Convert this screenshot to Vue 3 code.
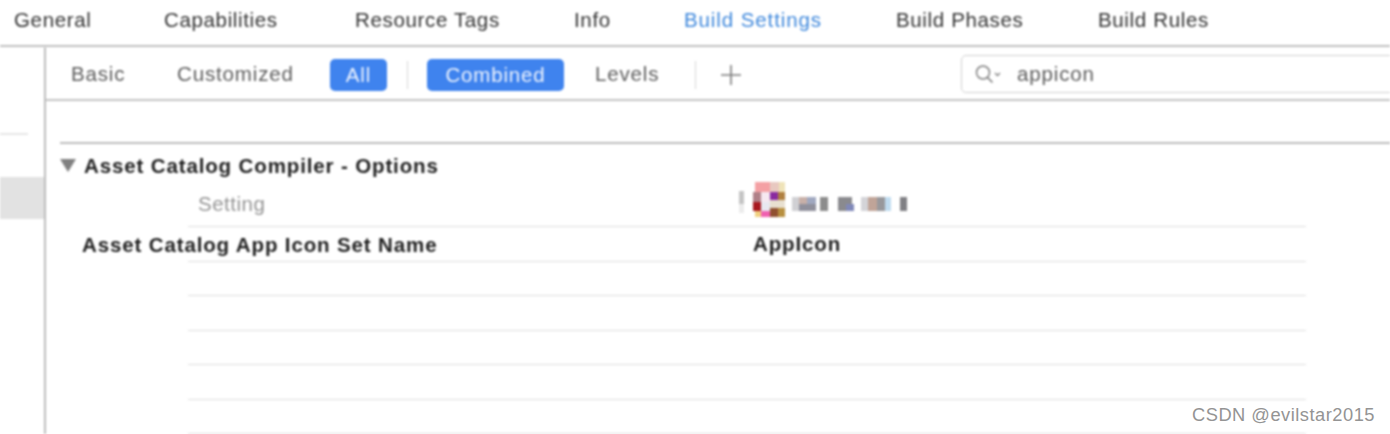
<script setup>
const tabs = ['General', 'Capabilities', 'Resource Tags', 'Info', 'Build Settings', 'Build Phases', 'Build Rules']
const emptyRows = [1, 2, 3, 4, 5]
const mosaic = [
  [2, 0, 15, 10, '#f4a0a4'], [17, 0, 9, 10, '#e8c8c0'], [26, 0, 6, 10, '#efe3b8'],
  [0, 10, 8, 10, '#b08088'], [8, 10, 9, 10, '#f6e8f0'], [17, 10, 8, 8, '#8a2aa0'], [25, 10, 7, 8, '#b08040'],
  [0, 20, 8, 9, '#a81820'], [8, 20, 9, 9, '#e8e8f0'], [17, 18, 15, 8, '#e8e0d0'],
  [2, 29, 8, 6, '#f0d080'], [8, 29, 9, 6, '#f060b0'], [17, 26, 8, 9, '#905030'], [25, 26, 7, 9, '#b89040']
]
const smear = [
  [0, 0, 7, 14, '#d0d0d4'], [7, 0, 8, 7, '#c8b0a8'], [15, 0, 9, 7, '#a0a8c0'], [7, 7, 17, 7, '#90909c'],
  [28, 0, 8, 14, '#8c8c8c'], [46, 0, 14, 14, '#8a8a8e'], [54, 7, 8, 7, '#8088b8'],
  [69, 0, 7, 14, '#d4d4d8'], [76, 0, 9, 14, '#c0a498'], [85, 0, 8, 14, '#98989c'], [93, 0, 6, 14, '#c0dcf0'],
  [108, 0, 7, 14, '#808084']
]
</script>

<template>
  <div class="page">
    <nav class="tabs">
      <span v-for="t in tabs" :key="t" class="tab" :class="{ active: t === 'Build Settings' }">{{ t }}</span>
    </nav>
    <div class="body">
      <aside class="side">
        <div class="side-line"></div>
        <div class="side-sel"></div>
      </aside>
      <main class="main">
        <div class="toolbar">
          <span class="tool basic">Basic</span>
          <span class="tool custom">Customized</span>
          <span class="pill all">All</span>
          <i class="sep first"></i>
          <span class="pill combined">Combined</span>
          <span class="tool levels">Levels</span>
          <i class="sep second"></i>
          <svg class="plus" width="22" height="22" viewBox="0 0 22 22">
            <path d="M11 1v20M1 11h20" stroke="#7c7c7c" stroke-width="1.6" fill="none" />
          </svg>
          <div class="search">
            <svg class="search-icon" width="30" height="22" viewBox="0 0 30 22">
              <circle cx="9" cy="9.500" r="6.500" stroke="#808080" stroke-width="1.500" fill="none" />
              <path d="M13.500 14.500l5 5" stroke="#808080" stroke-width="1.700" fill="none" />
              <path d="M21 10l2.500 2.500L26 10" stroke="#808080" stroke-width="1.300" fill="none" />
            </svg>
            <span class="search-text">appicon</span>
          </div>
        </div>
        <div class="content">
          <div class="section-head">
            <svg width="16" height="13" viewBox="0 0 16 13"><path d="M0 0h16L8 13z" fill="#808080" /></svg>
            <span>Asset Catalog Compiler - Options</span>
          </div>
          <div class="row header-row">
            <span class="setting">Setting</span>
            <div class="target">
              <svg width="176" height="38" viewBox="0 0 176 38">
                <rect x="0" y="9" width="5" height="13" fill="#c4c4c4" />
                <rect x="0" y="22" width="5" height="9" fill="#ececec" />
                <g transform="translate(14 0)">
                  <rect v-for="(m, i) in mosaic" :key="i" :x="m[0]" :y="m[1]" :width="m[2]" :height="m[3]" :fill="m[4]" />
                </g>
                <g transform="translate(53 15)">
                  <rect v-for="(m, i) in smear" :key="i" :x="m[0]" :y="m[1]" :width="m[2]" :height="m[3]" :fill="m[4]" />
                </g>
              </svg>
            </div>
          </div>
          <div class="row value-row">
            <span class="name">Asset Catalog App Icon Set Name</span>
            <span class="value">AppIcon</span>
          </div>
          <div v-for="r in emptyRows" :key="r" class="row empty"></div>
        </div>
      </main>
    </div>
    <div class="mark">CSDN @evilstar2015</div>
  </div>
</template>

<style scoped>
.page {
  position: relative;
  width: 1390px;
  height: 434px;
  overflow: hidden;
  background: #fff;
  font-family: "Liberation Sans", Arial, sans-serif;
  color: #555;
}
.tabs {
  display: grid;
  grid-template-columns: 150px 191px 219px 110px 212px 202px 1fr;
  padding-left: 14px;
  padding-bottom: 6px;
  height: 39px;
  align-items: center;
  border-bottom: 2px solid #c0c0c0;
  font-size: 20.500px;
  letter-spacing: 0.650px;
  filter: blur(0.8px);
}
.tab { color: #333; white-space: nowrap; }
.tab.active { color: #3f88dc; letter-spacing: 0.900px; }
.body { display: flex; height: 387px; filter: blur(0.8px); }
.side {
  width: 44px;
  flex: none;
  border-right: 2px solid #bcbcbc;
  padding-top: 86px;
}
.side-line { width: 28px; height: 2px; background: #e6e6e6; }
.side-sel { height: 42px; margin-top: 42px; background: #e2e2e2; }
.main { flex: 1; min-width: 0; overflow: hidden; }
.toolbar {
  display: flex;
  align-items: center;
  height: 52px;
  border-bottom: 2px solid #c4c4c4;
  font-size: 20.500px;
  letter-spacing: 0.850px;
}
.toolbar > * { flex: none; }
.tool { color: #5c5c5c; white-space: nowrap; margin-top: 2px; }
.basic { margin-left: 25px; width: 106px; }
.custom { width: 153px; }
.pill {
  background: #3f83ee;
  color: #eef4fe;
  border-radius: 5px;
  height: 32px;
  line-height: 32px;
  text-align: center;
  margin-top: 4px;
}
.all { width: 57px; }
.sep { width: 1px; height: 28px; margin-top: 4px; background: #d8d8d8; }
.sep.first { margin-left: 20px; }
.combined { width: 137px; margin-left: 19px; }
.levels { margin-left: 31px; width: 100px; }
.plus { margin-left: 24px; margin-top: 4px; }
.search {
  display: flex;
  align-items: center;
  width: 460px;
  height: 38px;
  margin-left: 219px;
  margin-top: 1px;
  padding-left: 12px;
  box-sizing: border-box;
  border: 1px solid #d0d0d0;
  border-radius: 5px;
}
.search-icon { flex: none; }
.search-text { color: #5c5c5c; margin-left: 13px; }
.content {
  margin: 41px 0 0 14px;
  border-top: 2px solid #bcbcbc;
  padding-top: 10px;
}
.section-head {
  display: flex;
  align-items: center;
  gap: 8px;
  height: 23px;
  font-size: 20.500px;
  font-weight: 700;
  letter-spacing: 0.870px;
  color: #1f1f1f;
}
.row {
  position: relative;
  height: 34.500px;
  display: flex;
  align-items: center;
  font-size: 20.500px;
  letter-spacing: 0.870px;
}
.row::after {
  content: "";
  position: absolute;
  left: 128px;
  width: 1118px;
  bottom: 0;
  height: 1px;
  background: #dedede;
}
.header-row { height: 52px; margin-top: -2px; padding-top: 7px; box-sizing: border-box; }
.setting { margin-left: 138px; width: 541px; color: #949494; margin-top: -1px; letter-spacing: 0.500px; }
.target { height: 38px; margin-top: -8px; }
.name { margin-left: 22px; width: 671px; font-weight: 700; color: #1f1f1f; white-space: nowrap; margin-top: 1px; }
.value { font-weight: 700; color: #1f1f1f; margin-top: -1px; }
.mark {
  position: absolute;
  right: 15px;
  bottom: 8px;
  font-size: 18.300px;
  letter-spacing: 0.500px;
  color: #949494;
}
</style>
